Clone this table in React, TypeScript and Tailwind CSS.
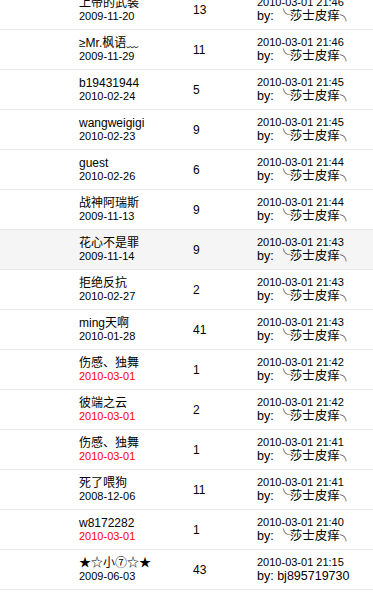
const rows = [
  { name: "上帝的武装", date: "2009-11-20", count: "13", last: "2010-03-01 21:46", by: "╰莎士皮痒╮" },
  { name: "≥Mr.枫语﹏", date: "2009-11-29", count: "11", last: "2010-03-01 21:46", by: "╰莎士皮痒╮" },
  { name: "b19431944", date: "2010-02-24", count: "5", last: "2010-03-01 21:45", by: "╰莎士皮痒╮" },
  { name: "wangweigigi", date: "2010-02-23", count: "9", last: "2010-03-01 21:45", by: "╰莎士皮痒╮" },
  { name: "guest", date: "2010-02-26", count: "6", last: "2010-03-01 21:44", by: "╰莎士皮痒╮" },
  { name: "战神阿瑞斯", date: "2009-11-13", count: "9", last: "2010-03-01 21:44", by: "╰莎士皮痒╮" },
  { name: "花心不是罪", date: "2009-11-14", count: "9", last: "2010-03-01 21:43", by: "╰莎士皮痒╮", hover: true },
  { name: "拒绝反抗", date: "2010-02-27", count: "2", last: "2010-03-01 21:43", by: "╰莎士皮痒╮" },
  { name: "ming天啊", date: "2010-01-28", count: "41", last: "2010-03-01 21:43", by: "╰莎士皮痒╮" },
  { name: "伤感、独舞", date: "2010-03-01", count: "1", last: "2010-03-01 21:42", by: "╰莎士皮痒╮", today: true },
  { name: "彼端之云", date: "2010-03-01", count: "2", last: "2010-03-01 21:42", by: "╰莎士皮痒╮", today: true },
  { name: "伤感、独舞", date: "2010-03-01", count: "1", last: "2010-03-01 21:41", by: "╰莎士皮痒╮", today: true },
  { name: "死了喂狗", date: "2008-12-06", count: "11", last: "2010-03-01 21:41", by: "╰莎士皮痒╮" },
  { name: "w8172282", date: "2010-03-01", count: "1", last: "2010-03-01 21:40", by: "╰莎士皮痒╮", today: true },
  { name: "★☆小⑦☆★", date: "2009-06-03", count: "43", last: "2010-03-01 21:15", by: "bj895719730" },
];

export default function App() {
  return (
    <div
      className="w-[373px] h-[597px] overflow-hidden bg-white text-black"
      style={{ fontFamily: '"Liberation Sans", "Noto Sans CJK SC", sans-serif' }}
    >
      <div className="-mt-[10px]">
        {rows.map((r, i) => (
          <div
            key={i}
            className={`grid grid-cols-[79px_114px_64px_1fr] items-center h-[40px] border-b border-[#e8e8e8] ${
              r.hover ? "bg-[#f5f5f5]" : "bg-white"
            }`}
          >
            <div />
            <div className="flex flex-col">
              <span className="text-[12px] leading-[14px]">{r.name}</span>
              <span className={`text-[11px] leading-[13px] ${r.today ? "text-[#ff0000]" : "text-black"}`}>
                {r.date}
              </span>
            </div>
            <div className="text-[12px] leading-[14px]">{r.count}</div>
            <div className="flex flex-col">
              <span className="text-[11px] leading-[13px]">{r.last}</span>
              <span className="text-[12.5px] leading-[15px]">by: {r.by}</span>
            </div>
          </div>
        ))}
      </div>
    </div>
  );
}
